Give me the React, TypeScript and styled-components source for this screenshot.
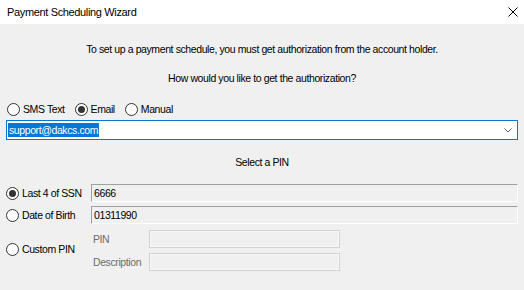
import React from "react";
import styled, { createGlobalStyle } from "styled-components";

const Global = createGlobalStyle`
  html, body { margin: 0; padding: 0; background: #f0f0f0; }
  #root { width: 524px; height: 290px; }
`;

const Window = styled.div`
  width: 524px;
  height: 290px;
  display: flex;
  flex-direction: column;
  font-family: "Liberation Sans", Arial, sans-serif;
  font-size: 10.5px;
  letter-spacing: -0.4px;
  color: #000;
  overflow: hidden;
`;

const TitleBar = styled.div`
  height: 24px;
  flex: none;
  background: #fff;
  display: flex;
  align-items: center;
  justify-content: space-between;
  padding: 0 6px 0 7px;
`;

const Title = styled.span`
  font-family: "Liberation Sans", Arial, sans-serif;
  font-size: 11px;
  letter-spacing: -0.35px;
  color: #000;
`;

const CloseIcon = styled.svg`
  width: 10px;
  height: 10px;
`;

const Body = styled.div`
  flex: 1;
  background: #f0f0f0;
  padding: 19px 6px 0 6px;
  display: flex;
  flex-direction: column;
`;

const CenterText = styled.div<{ $mt?: number }>`
  text-align: center;
  line-height: 13px;
  height: 13px;
  margin-top: ${(p) => p.$mt ?? 0}px;
`;

const RadioRow = styled.div`
  display: flex;
  align-items: center;
  gap: 10px;
  margin-top: 17px;
  padding-left: 1px;
  height: 14px;
`;

const RadioLabel = styled.label`
  display: inline-flex;
  align-items: center;
  gap: 3px;
  line-height: 13px;
  white-space: nowrap;
`;

const RadioCircle = styled.span<{ $checked?: boolean }>`
  width: 11px;
  height: 11px;
  border: 1px solid #333;
  border-radius: 50%;
  background: #fff;
  display: inline-flex;
  align-items: center;
  justify-content: center;
  flex: none;
  &::after {
    content: "";
    width: 7px;
    height: 7px;
    border-radius: 50%;
    background: #333;
    display: ${(p) => (p.$checked ? "block" : "none")};
  }
`;

const Combo = styled.div`
  margin-top: 4px;
  height: 18px;
  border: 1px solid #0078d7;
  background: #fff;
  display: flex;
  align-items: center;
  justify-content: space-between;
  padding: 0 5px 0 1px;
`;

const Selected = styled.span`
  background: #0078d7;
  color: #fff;
  line-height: 14px;
  padding: 0 1px;
`;

const Chevron = styled.svg`
  width: 8px;
  height: 5px;
`;

const SectionTitle = styled.div`
  text-align: center;
  line-height: 13px;
  margin-top: 16px;
`;

const PinGrid = styled.div`
  display: grid;
  grid-template-columns: 85px 1fr;
  row-gap: 4px;
  margin-top: 15px;
  align-items: center;
`;

const TextBox = styled.div`
  box-sizing: border-box;
  height: 18px;
  border-top: 1px solid #a0a0a0;
  border-left: 1px solid #a0a0a0;
  border-right: 1px solid #fff;
  border-bottom: 1px solid #fff;
  background: #f0f0f0;
  display: flex;
  align-items: center;
  padding-left: 2px;
`;

const CustomBlock = styled.div`
  display: grid;
  grid-template-columns: 56px 191px;
  row-gap: 5px;
  align-items: center;
  padding-left: 2px;
  margin-top: 2px;
`;

const DisabledLabel = styled.span`
  color: #6d6d6d;
  line-height: 13px;
`;

const DisabledBox = styled.div`
  height: 18px;
  box-sizing: border-box;
  border: 1px solid #d2d2d2;
  box-shadow: inset 0 0 0 1px #f9f9f9;
  background: #f0f0f0;
`;

function Radio({ label, checked }: { label: string; checked?: boolean }) {
  return (
    <RadioLabel>
      <RadioCircle $checked={checked} />
      <span>{label}</span>
    </RadioLabel>
  );
}

export default function App() {
  return (
    <Window>
      <Global />
      <TitleBar>
        <Title>Payment Scheduling Wizard</Title>
        <CloseIcon viewBox="0 0 10 10">
          <path d="M0.5 0.5 L9.5 9.5 M9.5 0.5 L0.5 9.5" stroke="#000" strokeWidth="1" />
        </CloseIcon>
      </TitleBar>
      <Body>
        <CenterText>To set up a payment schedule, you must get authorization from the account holder.</CenterText>
        <CenterText $mt={16}>How would you like to get the authorization?</CenterText>
        <RadioRow>
          <Radio label="SMS Text" />
          <Radio label="Email" checked />
          <Radio label="Manual" />
        </RadioRow>
        <Combo>
          <Selected>support@dakcs.com</Selected>
          <Chevron viewBox="0 0 8 5">
            <path d="M0.5 0.5 L4 4 L7.5 0.5" stroke="#606060" fill="none" strokeWidth="1" />
          </Chevron>
        </Combo>
        <SectionTitle>Select a PIN</SectionTitle>
        <PinGrid>
          <Radio label="Last 4 of SSN" checked />
          <TextBox>6666</TextBox>
          <Radio label="Date of Birth" />
          <TextBox>01311990</TextBox>
          <Radio label="Custom PIN" />
          <CustomBlock>
            <DisabledLabel>PIN</DisabledLabel>
            <DisabledBox />
            <DisabledLabel>Description</DisabledLabel>
            <DisabledBox />
          </CustomBlock>
        </PinGrid>
      </Body>
    </Window>
  );
}
